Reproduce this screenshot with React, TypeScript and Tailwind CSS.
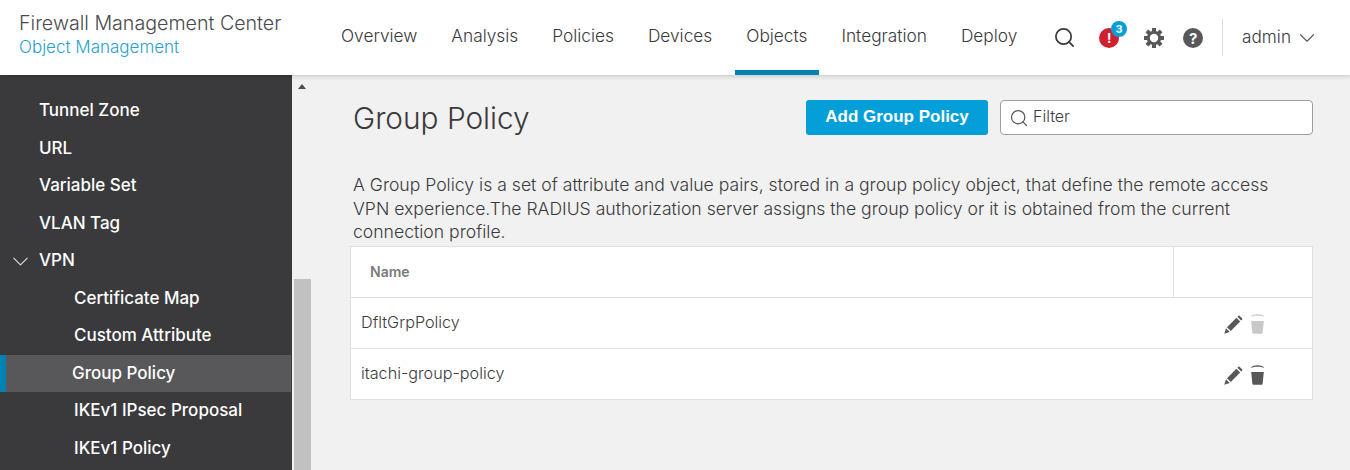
import { ChevronDown, Search } from "lucide-react";

const navItems = ["Overview", "Analysis", "Policies", "Devices", "Objects", "Integration", "Deploy"];

const sideItems = [
  { label: "Tunnel Zone", level: 1 },
  { label: "URL", level: 1 },
  { label: "Variable Set", level: 1 },
  { label: "VLAN Tag", level: 1 },
  { label: "VPN", level: 1, open: true },
  { label: "Certificate Map", level: 2 },
  { label: "Custom Attribute", level: 2 },
  { label: "Group Policy", level: 2, active: true },
  { label: "IKEv1 IPsec Proposal", level: 2 },
  { label: "IKEv1 Policy", level: 2 },
];

const rows = [
  { name: "DfltGrpPolicy", canDelete: false },
  { name: "itachi-group-policy", canDelete: true },
];

function PencilIcon() {
  return (
    <svg width="19" height="19" viewBox="0 0 19 19" className="text-[#58585b]">
      <path fill="currentColor" d="M.3 18.700l1.700-5.500 3.800 3.800z" />
      <path fill="currentColor" d="M3 12.200L12.400 2.800l3.800 3.800L6.800 16z" />
      <path fill="currentColor" d="M13.400 1.800l.9-.9c.5-.4 1-.4 1.400 0l2.400 2.400c.4.4.4 1 0 1.400l-.9.9z" />
    </svg>
  );
}

function TrashIcon({ muted }: { muted: boolean }) {
  return (
    <svg width="15" height="20" viewBox="0 0 15 20" className={muted ? "text-[#c8c8c8]" : "text-[#58585b]"}>
      <path fill="currentColor" d="M.5 3C2 1 4.600.3 7.500.3s5.500.7 7 2.700C12.500 2.100 10 1.800 7.500 1.800S2.500 2.100.5 3z" />
      <path fill="currentColor" d="M1.200 7h12.600l-1.200 12c0 .4-.4.8-.8.8H3.200c-.4 0-.8-.4-.8-.8z" />
    </svg>
  );
}

function GearIcon() {
  return (
    <svg width="20" height="20" viewBox="0 0 20 20" className="text-[#58585b]">
      <circle cx="10" cy="10" r="5.700" fill="none" stroke="currentColor" strokeWidth="3" />
      {[0, 45, 90, 135, 180, 225, 270, 315].map((angle) => (
        <rect key={angle} x="8" y="0" width="4" height="4" fill="currentColor" transform={`rotate(${angle} 10 10)`} />
      ))}
    </svg>
  );
}

export default function App() {
  return (
    <div className="flex h-[470px] w-[1350px] flex-col overflow-hidden bg-[#f1f1f1] font-['Inter',Arial,sans-serif]">
      {/* Header */}
      <header className="z-10 flex h-[75px] shrink-0 items-stretch bg-white shadow-[0_1px_5px_rgba(0,0,0,0.2)]">
        <div className="w-[324px] pl-[19px] pt-[10px]">
          <div className="text-[19.650px] font-light leading-[26px] text-[#4a4a4c]">Firewall Management Center</div>
          <div className="text-[17px] font-light leading-[23px] text-[#2a9fd0]">Object Management</div>
        </div>
        <nav className="flex items-stretch">
          {navItems.map((item) => (
            <div
              key={item}
              className={`mx-[5.500px] flex items-start px-[11.500px] pt-[26px] text-[17.300px] font-light leading-[20px] text-[#3a3a3c] ${
                item === "Objects" ? "border-b-[5px] border-[#0083b3]" : ""
              }`}
            >
              {item}
            </div>
          ))}
        </nav>
        <div className="ml-auto flex items-start pr-[30px]">
          <Search size={23} strokeWidth={1.8} className="mt-[26px] text-[#3a3a3c]" />
          <div className="relative ml-[23px] mt-[28px] flex h-5 w-5 items-center justify-center rounded-full bg-[#cf2030] text-[13px] font-bold leading-none text-white">
            !
            <span className="absolute -right-[8px] -top-[7px] flex h-4 w-4 items-center justify-center rounded-full bg-[#049fd9] text-[11px] font-bold text-white">
              3
            </span>
          </div>
          <div className="ml-[25px] mt-[28px]">
            <GearIcon />
          </div>
          <div className="ml-[19px] mt-[28px] flex h-5 w-5 items-center justify-center rounded-full bg-[#58585b] text-[15px] font-bold leading-none text-white">
            ?
          </div>
          <div className="ml-[19px] mt-[19px] h-[37px] w-px bg-[#dfdfdf]" />
          <div className="ml-[19px] mt-[22.500px] flex items-center gap-[3px] text-[17.200px] font-light leading-[22px] text-[#3a3a3c]">
            admin
            <ChevronDown size={26} strokeWidth={1} className="mt-[2px] text-[#58585b]" />
          </div>
        </div>
      </header>

      <div className="flex min-h-0 flex-1">
        {/* Sidebar */}
        <aside className="w-[292px] shrink-0 bg-[#3a3a3c] pt-[17.250px]">
          {sideItems.map((item) => (
            <div
              key={item.label}
              className={`flex h-[37.500px] items-center text-[17px] font-medium text-white ${
                item.active
                  ? "mr-px border-l-[6px] border-[#0083b3] bg-[#58585b] pl-[66px] text-[#f2f2f2]"
                  : item.level === 2
                    ? "pl-[74px]"
                    : "pl-[39px]"
              }`}
            >
              {item.open && (
                <ChevronDown size={27} strokeWidth={0.9} className="-ml-[32.500px] mr-[5.500px] text-[#e5e5e5]" />
              )}
              {item.label}
            </div>
          ))}
        </aside>

        {/* Scrollbar */}
        <div className="flex w-[19px] shrink-0 flex-col pl-[2px]">
          <div className="ml-[4px] mt-[9px] h-0 w-0 border-x-[4.500px] border-b-[5px] border-x-transparent border-b-[#4d4d4f]" />
          <div className="mt-[190px] flex-1 bg-[#c1c1c1]" />
        </div>

        {/* Content */}
        <main className="min-w-0 flex-1 pl-[39px] pr-[37px]">
          <div className="flex items-start justify-between pl-[3px] pt-[25px]">
            <h1 className="-mt-px mb-px text-[29.800px] font-light leading-[38px] text-[#3a3a3c]">Group Policy</h1>
            <div className="flex gap-3">
              <button className="h-[35px] w-[182px] rounded-[3px] bg-[#049fd9] pb-[2px] font-['Liberation_Sans',Arial,sans-serif] text-[17px] font-bold text-white">
                Add Group Policy
              </button>
              <div className="flex h-[35px] w-[313px] items-center gap-[4px] rounded-[4px] border border-[#9e9ea2] bg-white pb-[3px] pl-[8px] text-[16px] font-light text-[#3a3a3c]">
                <Search size={20} strokeWidth={1.5} className="mt-[3px] text-[#58585b]" />
                Filter
              </div>
            </div>
          </div>

          <p className="mt-[35px] whitespace-nowrap pl-[3px] text-[17.600px] font-light leading-[23.500px] text-[#3a3a3c]">
            A Group Policy is a set of attribute and value pairs, stored in a group policy object, that define the
            remote access
            <br />
            VPN experience.The RADIUS authorization server assigns the group policy or it is obtained from the current
            <br />
            connection profile.
          </p>

          <div className="mt-[2.500px] border border-[#dfdfdf] bg-white">
            <div className="flex h-[51px] border-b border-[#dfdfdf]">
              <div className="flex-1 pl-[19px] text-[14px] font-semibold leading-[49px] text-[#7a7a7d]">Name</div>
              <div className="w-[139px] border-l border-[#dfdfdf]" />
            </div>
            {rows.map((row, index) => (
              <div
                key={row.name}
                className={`flex items-center pl-[10px] pr-[47px] text-[16.200px] font-light text-[#3a3a3c] ${
                  index < rows.length - 1 ? "h-[51px] border-b border-[#dfdfdf]" : "h-[50px]"
                }`}
              >
                <span className="flex-1 pb-[1px]">{row.name}</span>
                <div className="flex items-center gap-[7px] pt-[2px]">
                  <PencilIcon />
                  <TrashIcon muted={!row.canDelete} />
                </div>
              </div>
            ))}
          </div>
        </main>
      </div>
    </div>
  );
}
